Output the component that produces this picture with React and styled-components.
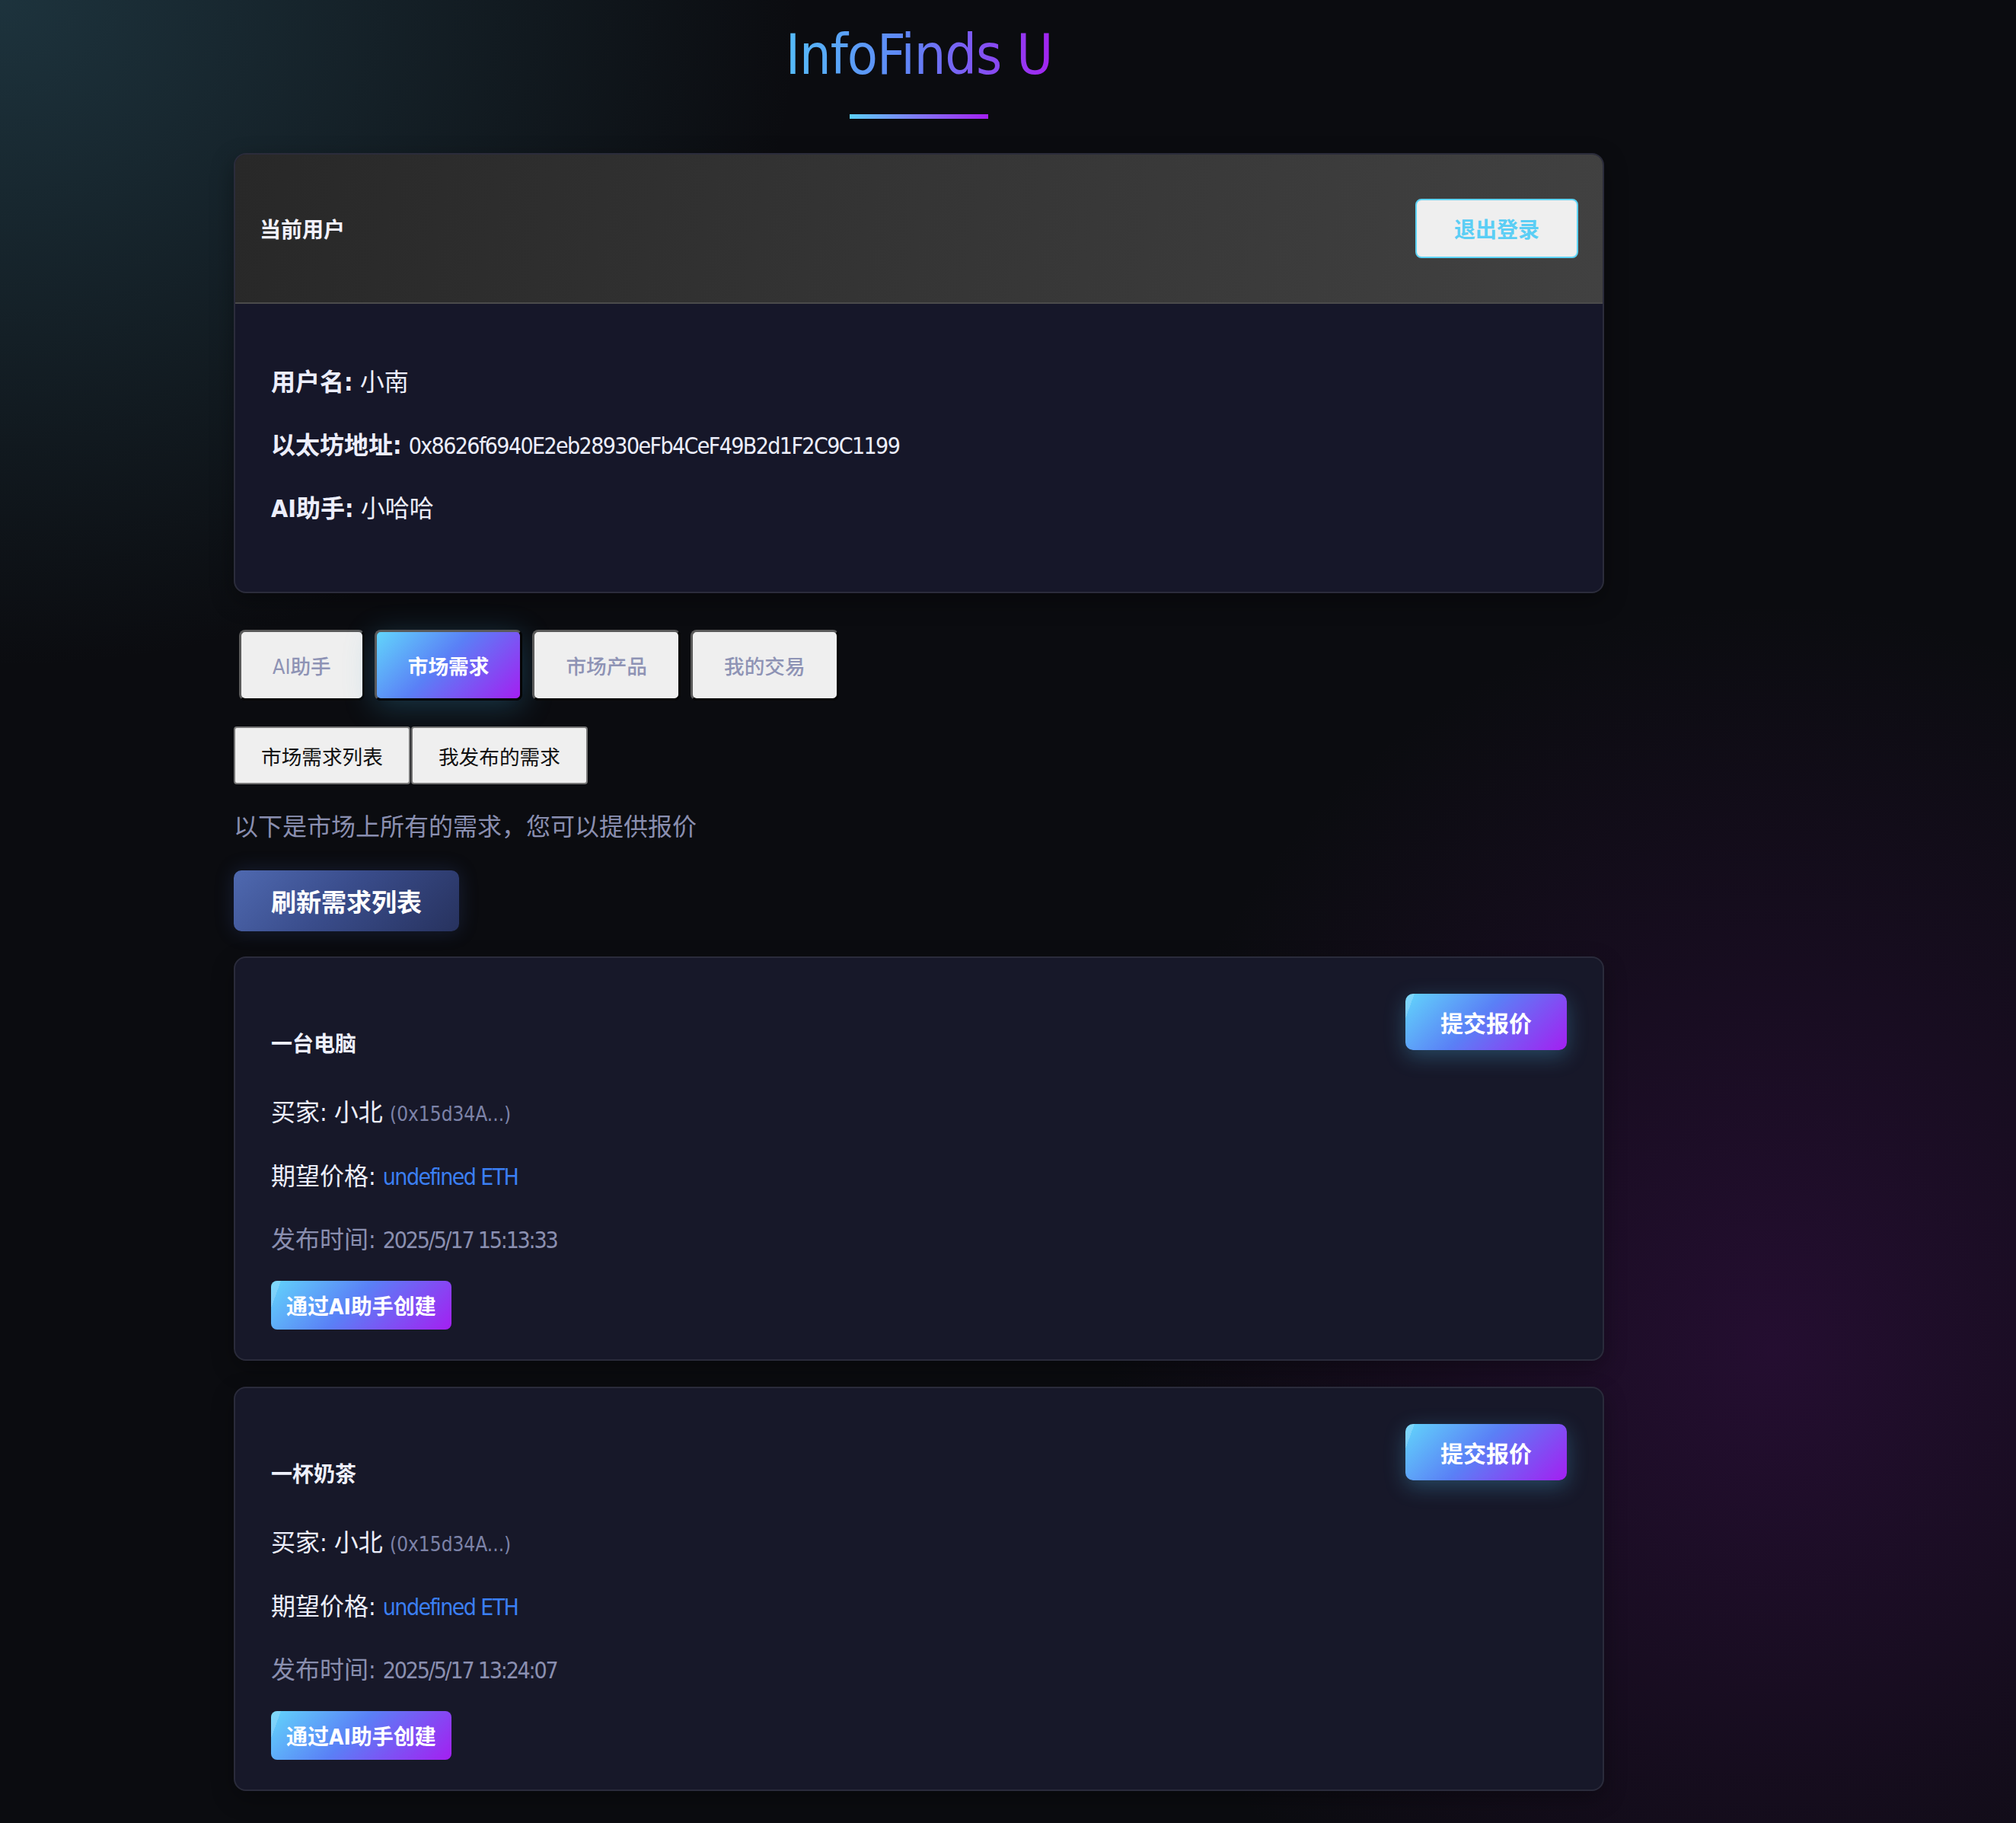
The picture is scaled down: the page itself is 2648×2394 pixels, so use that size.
import React from 'react';
import styled, { createGlobalStyle, css } from 'styled-components';

const FONT = `"Liberation Sans Narrow", "DejaVu Sans Condensed", "Noto Sans CJK SC", sans-serif`;

const GlobalStyle = createGlobalStyle`
  html, body { margin: 0; padding: 0; }
  body {
    background: #0b0c10;
    font-family: ${FONT};
    color: #e8e9f6;
  }
  button { font-family: ${FONT}; cursor: pointer; }
`;

const brandGradient = css`
  background: linear-gradient(135deg, #62d5fb 0%, #5a80f6 45%, #a41ff1 100%);
`;

const Page = styled.div`
  min-height: 2394px;
  box-sizing: border-box;
  padding: 0 0 43px 307px;
  background:
    radial-gradient(ellipse 1500px 1250px at 0% 0%, rgba(36, 66, 78, 0.72), transparent 70%),
    radial-gradient(ellipse 1250px 1400px at 88% 74%, rgba(64, 16, 84, 0.48), transparent 70%),
    #0b0c10;
`;

const Container = styled.div`
  width: 1800px;
  display: flex;
  flex-direction: column;
`;

const Header = styled.header`
  display: flex;
  flex-direction: column;
  align-items: center;
`;

const Title = styled.h1`
  margin: 35px 0 0;
  font-size: 73px;
  line-height: 73px;
  letter-spacing: -1px;
  font-weight: 400;
  background: linear-gradient(90deg, #55bcf9 0%, #5f86f6 45%, #a323f0 100%);
  -webkit-background-clip: text;
  background-clip: text;
  color: transparent;
`;

const Underline = styled.div`
  width: 182px;
  height: 6px;
  margin-top: 42px;
  background: linear-gradient(90deg, #5cd0f8, #a41ff0);
`;

const UserCard = styled.section`
  margin-top: 45px;
  border: 2px solid #2b2c3b;
  border-radius: 16px;
  overflow: hidden;
  background: #161729;
  box-shadow: 0 10px 30px rgba(0, 0, 0, 0.35);
`;

const CardHeader = styled.div`
  height: 194px;
  display: flex;
  align-items: center;
  justify-content: space-between;
  padding: 0 32px;
  background: linear-gradient(100deg, #282828 0%, #353535 50%, #414141 100%);
  border-bottom: 2px solid #4b4b4b;
`;

const HeaderTitle = styled.h2`
  margin: 0;
  font-size: 28px;
  font-weight: 700;
  color: #f2f2fb;
`;

const LogoutButton = styled.button`
  height: 78px;
  padding: 0 49px;
  border: 2px solid #5dd3f6;
  border-radius: 8px;
  background: #efefef;
  color: #5bcef5;
  font-size: 28px;
  font-weight: 700;
`;

const CardBody = styled.div`
  padding: 46px 47px 51px;
`;

const InfoLine = styled.p`
  margin: 32px 0;
  font-size: 32px;
  line-height: 51px;
  color: #eceefb;
  strong { font-weight: 700; }
`;

const Latin = styled.span`
  font-size: 30px;
  letter-spacing: ${(p) => p.$spacing || '-1.6px'};
`;

const TabBar = styled.nav`
  margin-top: 48px;
  padding-left: 7px;
  display: flex;
  gap: 13px;
`;

const Tab = styled.button`
  height: 93px;
  padding: 0 41px;
  border: 3px solid;
  border-color: #5a5a5a #050505 #050505 #5a5a5a;
  border-radius: 8px;
  font-size: 26.67px;
  font-weight: ${(p) => (p.$active ? 700 : 500)};
  color: ${(p) => (p.$active ? '#ffffff' : '#8e93b5')};
  background: #efefef;
  ${(p) =>
    p.$active &&
    css`
      ${brandGradient};
      box-shadow: 0 8px 40px rgba(60, 170, 220, 0.28);
    `}
`;

const SubTabBar = styled.div`
  margin-top: 34px;
  display: flex;
  gap: 1px;
`;

const SubTab = styled.button`
  height: 76px;
  padding: 0 34px;
  border: 2px solid #767676;
  border-radius: 4px;
  background: #efefef;
  color: #111;
  font-size: 26.67px;
  font-weight: 400;
`;

const Description = styled.p`
  margin: 31px 0 0;
  font-size: 32px;
  line-height: 51px;
  color: #8a8fb0;
`;

const RefreshButton = styled.button`
  align-self: flex-start;
  margin-top: 31px;
  height: 80px;
  padding: 0 49px;
  border: none;
  border-radius: 10px;
  background: linear-gradient(135deg, #4f69b0 0%, #3a4d8c 45%, #27325e 100%);
  color: #ffffff;
  font-size: 33px;
  font-weight: 700;
  box-shadow: 0 0 26px rgba(70, 100, 190, 0.22);
`;

const DemandList = styled.div`
  margin-top: 33px;
  display: flex;
  flex-direction: column;
  gap: 34px;
`;

const DemandCard = styled.article`
  border: 2px solid #2a2b3b;
  border-radius: 16px;
  background: #171829;
  padding: 47px 47px 39px;
  box-shadow: 0 10px 30px rgba(0, 0, 0, 0.3);
`;

const CardTop = styled.div`
  display: flex;
  justify-content: space-between;
  align-items: flex-start;
`;

const ItemTitle = styled.h3`
  margin: 50px 0 0;
  font-size: 28px;
  line-height: 34px;
  font-weight: 700;
  color: #eef0fc;
`;

const GradientButton = styled.button`
  position: relative;
  overflow: hidden;
  border: none;
  color: #ffffff;
  font-weight: 700;
  ${brandGradient};
  &::before {
    content: '';
    position: absolute;
    inset: 0;
    background: linear-gradient(110deg, rgba(255, 255, 255, 0.18) 0 5%, transparent 5%);
    pointer-events: none;
  }
`;

const QuoteButton = styled(GradientButton)`
  height: 74px;
  padding: 0 46px;
  border-radius: 10px;
  font-size: 30px;
  box-shadow: 0 8px 28px rgba(80, 190, 240, 0.3);
`;

const AIButton = styled(GradientButton)`
  margin-top: 29px;
  height: 64px;
  padding: 0 20px;
  border-radius: 8px;
  font-size: 28px;
`;

const Details = styled.div`
  margin-top: 48px;
  display: flex;
  flex-direction: column;
  align-items: flex-start;
`;

const DetailLine = styled.div`
  font-size: 32px;
  line-height: 48px;
  color: ${(p) => (p.$muted ? '#8a8fb0' : '#eceefb')};
  & + & { margin-top: 34px; }
`;

const Addr = styled.span`
  font-size: 26px;
  color: #7d83a8;
`;

const Price = styled(Latin)`
  color: #3b7ff3;
`;

const demands = [
  { title: '一台电脑', buyer: '小北', addr: '0x15d34A...', time: '2025/5/17 15:13:33' },
  { title: '一杯奶茶', buyer: '小北', addr: '0x15d34A...', time: '2025/5/17 13:24:07' },
];

const tabs = ['AI助手', '市场需求', '市场产品', '我的交易'];

export default function App() {
  return (
    <>
      <GlobalStyle />
      <Page>
        <Container>
          <Header>
            <Title>InfoFinds U</Title>
            <Underline />
          </Header>

          <UserCard>
            <CardHeader>
              <HeaderTitle>当前用户</HeaderTitle>
              <LogoutButton>退出登录</LogoutButton>
            </CardHeader>
            <CardBody>
              <InfoLine>
                <strong>用户名:</strong> 小南
              </InfoLine>
              <InfoLine>
                <strong>以太坊地址:</strong> <Latin>0x8626f6940E2eb28930eFb4CeF49B2d1F2C9C1199</Latin>
              </InfoLine>
              <InfoLine>
                <strong>AI助手:</strong> 小哈哈
              </InfoLine>
            </CardBody>
          </UserCard>

          <TabBar>
            {tabs.map((t) => (
              <Tab key={t} $active={t === '市场需求'}>
                {t}
              </Tab>
            ))}
          </TabBar>

          <SubTabBar>
            <SubTab>市场需求列表</SubTab>
            <SubTab>我发布的需求</SubTab>
          </SubTabBar>

          <Description>以下是市场上所有的需求，您可以提供报价</Description>

          <RefreshButton>刷新需求列表</RefreshButton>

          <DemandList>
            {demands.map((d) => (
              <DemandCard key={d.title}>
                <CardTop>
                  <ItemTitle>{d.title}</ItemTitle>
                  <QuoteButton>提交报价</QuoteButton>
                </CardTop>
                <Details>
                  <DetailLine>
                    买家: {d.buyer} <Addr>({d.addr})</Addr>
                  </DetailLine>
                  <DetailLine>
                    期望价格: <Price>undefined ETH</Price>
                  </DetailLine>
                  <DetailLine $muted>
                    发布时间: <Latin $spacing="-2.2px">{d.time}</Latin>
                  </DetailLine>
                  <AIButton>通过AI助手创建</AIButton>
                </Details>
              </DemandCard>
            ))}
          </DemandList>
        </Container>
      </Page>
    </>
  );
}
